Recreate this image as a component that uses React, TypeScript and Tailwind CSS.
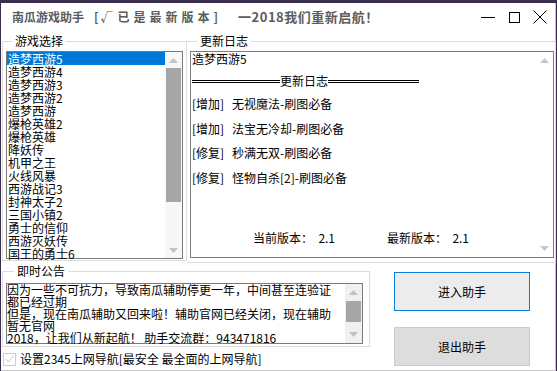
const games = [
  "造梦西游5",
  "造梦西游4",
  "造梦西游3",
  "造梦西游2",
  "造梦西游",
  "爆枪英雄2",
  "爆枪英雄",
  "降妖传",
  "机甲之王",
  "火线风暴",
  "西游战记3",
  "封神太子2",
  "三国小镇2",
  "勇士的信仰",
  "西游灭妖传",
  "国王的勇士6",
];

const notice = [
  "因为一些不可抗力，导致南瓜辅助停更一年，中间甚至连验证",
  "都已经过期",
  "但是，现在南瓜辅助又回来啦！辅助官网已经关闭，现在辅助",
  "暂无官网",
  "2018，让我们从新起航！ 助手交流群：943471816",
];

const changes = [
  { tag: "[增加]", text: "无视魔法-刷图必备", gap: "mt-[9px]" },
  { tag: "[增加]", text: "法宝无冷却-刷图必备", gap: "mt-[11px]" },
  { tag: "[修复]", text: "秒满无双-刷图必备", gap: "mt-[10px]" },
  { tag: "[修复]", text: "怪物自杀[2]-刷图必备", gap: "mt-[11px]" },
];

function Arrow({ up, color = "#a3a3a3" }: { up?: boolean; color?: string }) {
  return (
    <svg width="9" height="5" viewBox="0 0 9 5">
      {up ? <path d="M0 5 L4.5 0 L9 5 Z" fill={color} /> : <path d="M0 0 L4.5 5 L9 0 Z" fill={color} />}
    </svg>
  );
}

export default function App() {
  return (
    <div className="w-[557px] h-[371px] bg-[#3b2d4f] pt-[3px] pl-[1px] pr-[1px] overflow-hidden font-['Noto_Sans_CJK_SC','Liberation_Sans',sans-serif] text-[12px] text-black">
      <div className="h-full bg-white flex flex-col border-r border-b border-[#c4c4c4]">
        {/* Title bar */}
        <div className="h-[28px] shrink-0 flex items-center pl-[11px] pr-[2px]">
          <div className="flex items-center font-bold text-[#5c5c5c] leading-[14px] whitespace-pre">
            <span className="text-[12px]">南瓜游戏助手</span>
            <span className="ml-[10px] text-[12px] tracking-[2px]">[√</span>
            <span className="ml-[3px] text-[12px] tracking-[4px]">已是最新版本]</span>
            <span className="ml-[16px] text-[13px] tracking-[0.5px]">一2018我们重新启航！</span>
          </div>
          <div className="ml-auto flex items-center">
            <div className="w-[26px] h-[24px] flex items-center justify-center">
              <svg width="14" height="14" viewBox="0 0 14 14">
                <path d="M0 7.5 H14" stroke="#000" strokeWidth="1" />
              </svg>
            </div>
            <div className="w-[26px] h-[24px] flex items-center justify-center">
              <svg width="11" height="11" viewBox="0 0 11 11">
                <rect x="0.5" y="0.5" width="10" height="10" fill="none" stroke="#000" strokeWidth="1" />
              </svg>
            </div>
            <div className="w-[26px] h-[24px] flex items-center justify-center">
              <svg width="14" height="14" viewBox="0 0 14 14">
                <path d="M0.5 0.5 L13.5 13.5 M13.5 0.5 L0.5 13.5" stroke="#000" strokeWidth="1" />
              </svg>
            </div>
          </div>
        </div>

        {/* Top row */}
        <div className="mt-[3px] flex items-start pl-[1px] h-[229px] shrink-0">
          <fieldset className="w-[185px] border border-[#dcdcdc] px-[3px] pb-[1px]">
            <legend className="ml-[6px] px-[3px] leading-[14px]">游戏选择</legend>
            <div className="mt-[3px] h-[208px] w-[177px] border border-[#7a7a7a] flex">
              <div className="flex-1 flex flex-col">
                {games.map((g, i) => (
                  <div
                    key={g}
                    className={
                      i === 0
                        ? "h-[13px] leading-[13px] pl-[1px] bg-[#0078d7] text-white whitespace-nowrap"
                        : "h-[13px] leading-[13px] pl-[1px] whitespace-nowrap"
                    }
                  >
                    {g}
                  </div>
                ))}
              </div>
              <div className="w-[17px] bg-[#f7f7f7] flex flex-col">
                <div className="h-[16px] flex items-center justify-center">
                  <Arrow up color="#c2c2c2" />
                </div>
                <div className="h-[134px] mx-[1px] bg-[#a6a6a6]" />
                <div className="flex-1" />
                <div className="h-[16px] flex items-center justify-center">
                  <Arrow color="#c2c2c2" />
                </div>
              </div>
            </div>
          </fieldset>

          <fieldset className="w-[368px] border border-l-0 border-[#dcdcdc] pl-[3px] pr-[1px] pb-[4px]">
            <legend className="ml-[7px] px-[3px] leading-[14px]">更新日志</legend>
            <div className="mt-[3px] h-[207px] w-[364px] border border-[#7a7a7a] flex">
              <div className="flex-1 flex flex-col pl-[1px]">
                <div className="leading-[13px]">造梦西游5</div>
                <div className="mt-[9px] h-[14px] flex items-center">
                  <div className="w-[88px] h-[3px] border-y border-black" />
                  <span className="leading-[14px]">更新日志</span>
                  <div className="w-[91px] h-[3px] border-y border-black" />
                </div>
                {changes.map((c) => (
                  <div key={c.text} className={`${c.gap} leading-[14px] flex`}>
                    <span className="w-[40px]">{c.tag}</span>
                    <span>{c.text}</span>
                  </div>
                ))}
                <div className="mt-[46px] leading-[14px] flex pl-[61px] whitespace-pre">
                  <span className="w-[134px]">当前版本：  2.1</span>
                  <span>最新版本：  2.1</span>
                </div>
              </div>
              <div className="w-[17px] flex flex-col justify-between">
                <div className="h-[17px] flex items-center justify-center">
                  <Arrow up color="#c8c8c8" />
                </div>
                <div className="h-[17px] flex items-center justify-center">
                  <Arrow color="#c8c8c8" />
                </div>
              </div>
            </div>
          </fieldset>
        </div>

        {/* Bottom row */}
        <div className="flex items-start pl-[1px]">
          <div className="flex flex-col">
            <fieldset className="mt-[1px] w-[368px] border border-[#dcdcdc] pl-[3px] pr-[6px] pb-[2px]">
              <legend className="ml-[8px] px-[3px] leading-[14px]">即时公告</legend>
              <div className="mt-[5px] h-[61px] w-[357px] border border-[#7a7a7a] flex">
                <div className="flex-1 flex flex-col">
                  {notice.map((l) => (
                    <div key={l} className="h-[12px] leading-[12px] whitespace-pre">
                      {l}
                    </div>
                  ))}
                </div>
                <div className="w-[17px] bg-[#f0f0f0] flex flex-col">
                  <div className="h-[17px] flex items-center justify-center">
                    <Arrow up color="#c2c2c2" />
                  </div>
                  <div className="h-[21px] mx-[1px] bg-[#a6a6a6]" />
                  <div className="flex-1" />
                  <div className="h-[17px] flex items-center justify-center">
                    <Arrow color="#c2c2c2" />
                  </div>
                </div>
              </div>
            </fieldset>
            <div className="mt-[5px] flex items-center pl-[1px]">
              <div className="w-[13px] h-[13px] border border-[#cccccc] flex items-center justify-center">
                <svg width="9" height="8" viewBox="0 0 9 8">
                  <path d="M0.5 4 L3.5 7 L8.5 0.5" fill="none" stroke="#c6c6c6" strokeWidth="1" />
                </svg>
              </div>
              <span className="ml-[4px] leading-[14px] whitespace-pre">设置2345上网导航[最安全 最全面的上网导航]</span>
            </div>
          </div>

          <div className="ml-[24px] mt-[9px] flex flex-col gap-[16px]">
            <button className="w-[136px] h-[39px] bg-[#ececec] border border-[#0a7fd4] flex items-center justify-center">
              进入助手
            </button>
            <button className="w-[136px] h-[39px] bg-[#dddddd] border border-[#cccccc] flex items-center justify-center">
              退出助手
            </button>
          </div>
        </div>
      </div>
    </div>
  );
}
